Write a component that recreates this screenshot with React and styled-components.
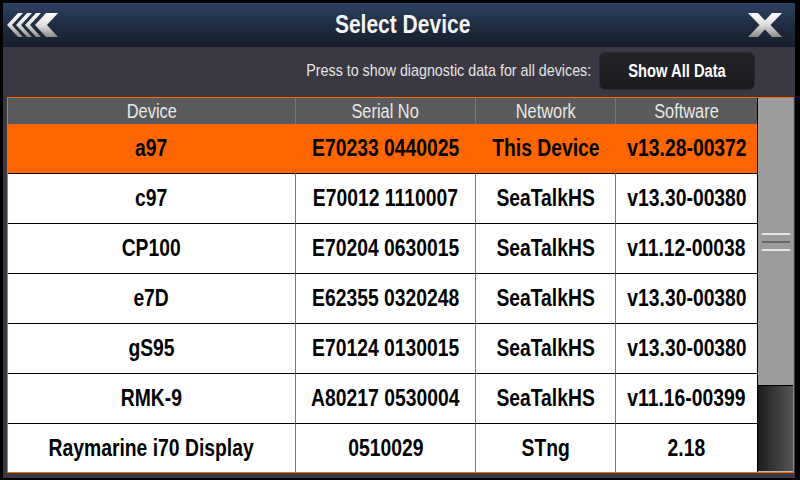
import React from 'react'
import styled, { createGlobalStyle } from 'styled-components'

const GlobalStyle = createGlobalStyle`
    html, body {
        margin: 0;
        padding: 0;
        background: #000;
    }
    body {
        font-family: "Liberation Sans", Arial, sans-serif;
    }
`

const devices = [
    { name: 'a97', serial: 'E70233 0440025', network: 'This Device', software: 'v13.28-00372', active: true },
    { name: 'c97', serial: 'E70012 1110007', network: 'SeaTalkHS', software: 'v13.30-00380' },
    { name: 'CP100', serial: 'E70204 0630015', network: 'SeaTalkHS', software: 'v11.12-00038' },
    { name: 'e7D', serial: 'E62355 0320248', network: 'SeaTalkHS', software: 'v13.30-00380' },
    { name: 'gS95', serial: 'E70124 0130015', network: 'SeaTalkHS', software: 'v13.30-00380' },
    { name: 'RMK-9', serial: 'A80217 0530004', network: 'SeaTalkHS', software: 'v11.16-00399' },
    { name: 'Raymarine i70 Display', serial: '0510029', network: 'STng', software: '2.18', last: true },
]

// the device UI uses a condensed Helvetica, squeeze Liberation Sans to match
const Narrow = styled.span`
    display: inline-block;
    white-space: nowrap;
    transform: scaleX(0.84);
    transform-origin: ${(p) => p.origin || 'center'};
`

const Frame = styled.div`
    width: 800px;
    height: 480px;
    box-sizing: border-box;
    padding: 3px 5px 3px 3px;
    background: #000;
    display: flex;
    flex-direction: column;
    overflow: hidden;
`

const Header = styled.header`
    height: 44px;
    flex: none;
    display: flex;
    align-items: center;
    justify-content: space-between;
    padding: 0 10px 0 3px;
    background: linear-gradient(to bottom, #2d4262 0%, #1f2d42 50%, #161e29 100%);
`

const Title = styled.h1`
    margin: 0;
    flex: 1;
    text-align: center;
    color: #f4f4f4;
    font-size: 25px;
    font-weight: bold;
    padding-bottom: 2px;
`

const IconButton = styled.div`
    width: ${(p) => p.w}px;
    height: 26px;
    display: flex;
    align-items: center;
    justify-content: center;
`

const Body = styled.main`
    flex: 1;
    display: flex;
    flex-direction: column;
    background: #3a3842;
    padding: 0 1px 5px 4px;
`

const Toolbar = styled.div`
    height: 50px;
    display: flex;
    align-items: center;
    justify-content: flex-end;
    gap: 8px;
    padding: 0 39px 2px 0;
    box-sizing: border-box;
`

const Hint = styled.span`
    color: #e4e4e4;
    font-size: 17px;
`

const ShowAllButton = styled.button`
    width: 156px;
    height: 38px;
    border: 1px solid #2a2a30;
    border-radius: 6px;
    background: linear-gradient(to bottom, #232328, #1b1b1f);
    color: #fff;
    font-family: inherit;
    font-size: 17.5px;
    font-weight: bold;
    padding: 0;
`

const Panel = styled.section`
    display: flex;
    border: 1px solid #ff6a00;
    height: 376px;
    box-sizing: border-box;
`

const Grid = styled.div`
    display: grid;
    grid-template-columns: 288px 180px 140px 141px;
    grid-template-rows: 26px repeat(6, 50px) 48px;
`

const HeadCell = styled.div`
    background: #5a5a5a;
    color: #e8e8e8;
    font-size: 19.5px;
    display: flex;
    align-items: center;
    justify-content: center;
    border-right: ${(p) => (p.end ? 'none' : '1px solid #7a7a7a')};
`

const Cell = styled.div`
    background: ${(p) => (p.active ? '#ff6600' : '#fff')};
    color: #000;
    font-size: 23px;
    font-weight: bold;
    display: flex;
    align-items: center;
    justify-content: center;
    border-bottom: ${(p) => (p.last ? 'none' : '1px solid #000')};
    border-right: ${(p) => (p.end ? 'none' : p.active ? '1px solid #ff6600' : '1px solid #7a7a7a')};
`

const Scrollbar = styled.div`
    width: 36px;
    display: flex;
    flex-direction: column;
    border-left: 1px solid #000;
    box-sizing: border-box;
`

const Thumb = styled.div`
    height: 287px;
    background: #9c9c9c;
    border-bottom: 1px solid #000;
    display: flex;
    flex-direction: column;
    align-items: center;
    justify-content: center;
    gap: 6px;
`

const Grip = styled.div`
    width: 28px;
    height: 2px;
    background: ${(p) => (p.dark ? '#6a6a6a' : '#e6e6e6')};
`

const Track = styled.div`
    flex: 1;
    background: linear-gradient(to right, #1c1c1c, #565656);
    border-bottom: 1px solid #bbb;
`

const BackIcon = () => (
    <svg width="52" height="26" viewBox="0 0 52 26">
        <defs>
            <linearGradient id="silverBack" x1="0" y1="0" x2="0" y2="1">
                <stop offset="0" stopColor="#ffffff" />
                <stop offset="0.5" stopColor="#e2e2e2" />
                <stop offset="1" stopColor="#8a8a8a" />
            </linearGradient>
        </defs>
        <g fill="url(#silverBack)">
            <polygon points="0,13 11,1 16,1 5,13 16,25 11,25" />
            <polygon points="9,13 20,1 25,1 14,13 25,25 20,25" />
            <polygon points="18,13 29,1 34,1 23,13 34,25 29,25" />
            <polygon points="28,13 39,1 51,1 40,13 51,25 39,25" />
        </g>
    </svg>
)

const CloseIcon = () => (
    <svg width="36" height="26" viewBox="0 0 36 26">
        <defs>
            <linearGradient id="silverClose" x1="0" y1="0" x2="0" y2="1">
                <stop offset="0" stopColor="#ffffff" />
                <stop offset="0.5" stopColor="#dcdcdc" />
                <stop offset="1" stopColor="#8c8c8c" />
            </linearGradient>
        </defs>
        <polygon
            fill="url(#silverClose)"
            points="1,1 11,1 18,8.5 25,1 35,1 23.5,13 35,25 25,25 18,17.5 11,25 1,25 12.5,13"
        />
    </svg>
)

const App = () => (
    <>
        <GlobalStyle />
        <Frame>
            <Header>
                <IconButton w={54}>
                    <BackIcon />
                </IconButton>
                <Title>
                    <Narrow>Select Device</Narrow>
                </Title>
                <IconButton w={40}>
                    <CloseIcon />
                </IconButton>
            </Header>
            <Body>
                <Toolbar>
                    <Hint>
                        <Narrow origin="right">Press to show diagnostic data for all devices:</Narrow>
                    </Hint>
                    <ShowAllButton>
                        <Narrow>Show All Data</Narrow>
                    </ShowAllButton>
                </Toolbar>
                <Panel>
                    <Grid>
                        <HeadCell><Narrow>Device</Narrow></HeadCell>
                        <HeadCell><Narrow>Serial No</Narrow></HeadCell>
                        <HeadCell><Narrow>Network</Narrow></HeadCell>
                        <HeadCell end><Narrow>Software</Narrow></HeadCell>
                        {devices.map((d) => (
                            <React.Fragment key={d.name}>
                                <Cell active={d.active} last={d.last}><Narrow>{d.name}</Narrow></Cell>
                                <Cell active={d.active} last={d.last}><Narrow>{d.serial}</Narrow></Cell>
                                <Cell active={d.active} last={d.last}><Narrow>{d.network}</Narrow></Cell>
                                <Cell active={d.active} last={d.last} end><Narrow>{d.software}</Narrow></Cell>
                            </React.Fragment>
                        ))}
                    </Grid>
                    <Scrollbar>
                        <Thumb>
                            <Grip />
                            <Grip dark />
                            <Grip />
                        </Thumb>
                        <Track />
                    </Scrollbar>
                </Panel>
            </Body>
        </Frame>
    </>
)

export default App
